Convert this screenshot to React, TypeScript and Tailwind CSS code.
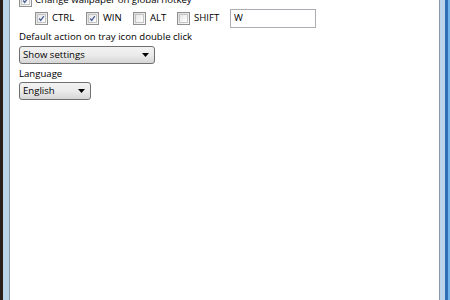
import React from 'react';

function Check({ checked }: { checked?: boolean }) {
  return (
    <span className="w-[13px] h-[13px] border border-[#8f8f8f] bg-gradient-to-br from-[#dcdcdc] to-[#fbfbfb] flex items-center justify-center shrink-0">
      <span className="w-[9px] h-[9px] border border-[#c4c4c4] bg-gradient-to-br from-[#e6e6e6] to-white flex items-center justify-center">
        {checked && (
          <svg width="9" height="9" viewBox="0 0 9 9">
            <path d="M1.5 4.5 L3.5 7 L7.5 1.5" fill="none" stroke="#4a5f97" strokeWidth="1.6" />
          </svg>
        )}
      </span>
    </span>
  );
}

function Combo({ label, width }: { label: string; width: string }) {
  return (
    <div className={`${width} h-[18px] border border-[#707070] rounded-[3px] bg-gradient-to-b from-[#f2f2f2] via-[#ebebeb] to-[#d6d6d6] flex items-center justify-between pl-[3px] pr-[5px]`}>
      <span>{label}</span>
      <svg width="7" height="4" viewBox="0 0 7 4">
        <path d="M0 0 H7 L3.5 4 Z" fill="#000" />
      </svg>
    </div>
  );
}

export default function App() {
  return (
    <div className="w-[450px] h-[300px] flex bg-white overflow-hidden text-[9.6px] text-black" style={{ fontFamily: '"Open Sans", "Noto Sans", sans-serif' }}>
      <div className="w-[3px] bg-[#2a1e1e]" />
      <div className="w-[6px] bg-[#bcd3ec]" />
      <div className="w-[1px] bg-[#8a97a8]" />
      <div className="flex-1 flex flex-col pl-[9px] -mt-[7px]">
        <div className="flex items-center gap-[3px] h-[14px]">
          <Check checked />
          <span className="leading-none">Change wallpaper on global hotkey</span>
        </div>
        <div className="flex items-center pl-[16px] mt-[1px] h-[20px]">
          <Check checked />
          <span className="ml-[4px] w-[34px]">CTRL</span>
          <Check checked />
          <span className="ml-[4px] w-[30px]">WIN</span>
          <Check />
          <span className="ml-[4px] w-[27px]">ALT</span>
          <Check />
          <span className="ml-[4px] w-[36px]">SHIFT</span>
          <div className="w-[86px] h-[19px] border border-[#abadb3] flex items-center px-[3px]">W</div>
        </div>
        <div className="mt-[1px] leading-[16px]">Default action on tray icon double click</div>
        <div className="mt-[1px]">
          <Combo label="Show settings" width="w-[136px]" />
        </div>
        <div className="mt-[2px] leading-[16px]">Language</div>
        <div>
          <Combo label="English" width="w-[72px]" />
        </div>
      </div>
      <div className="w-[1px] bg-[#8a97a8]" />
      <div className="w-[5px] bg-[#bcd3ec]" />
      <div className="w-[3px] bg-[#2f6db5]" />
      <div className="w-[2px] bg-[#6fb3ea]" />
    </div>
  );
}
